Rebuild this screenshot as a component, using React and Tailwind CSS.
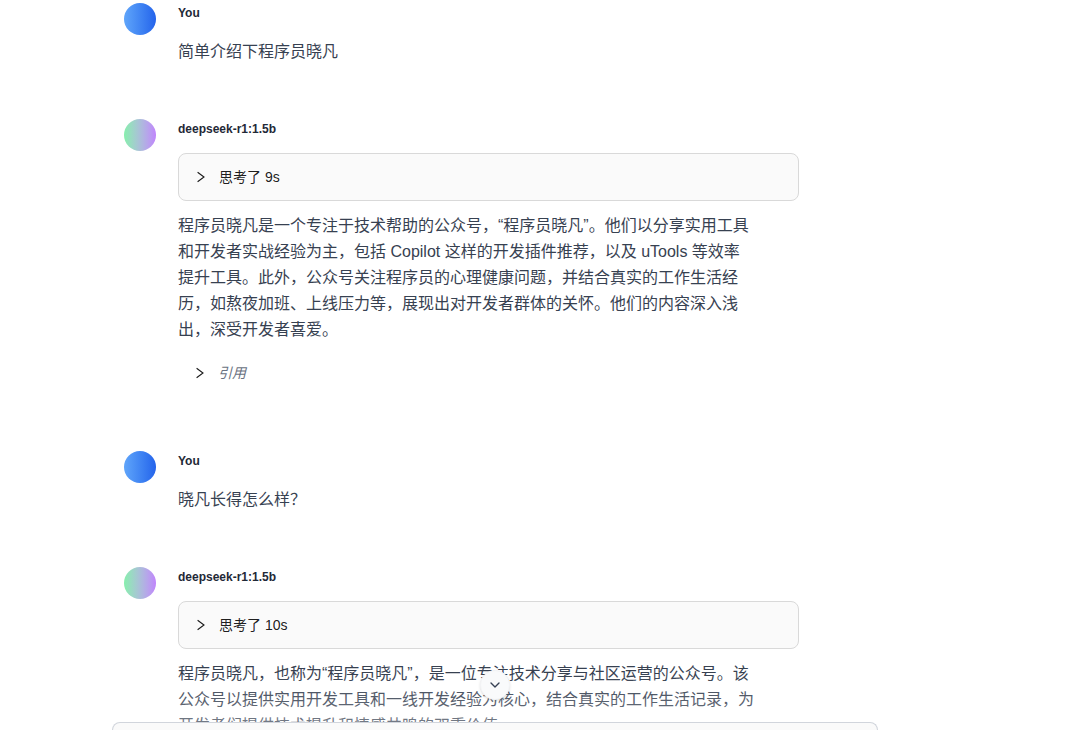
import { ChevronDown } from "lucide-react";
import { useState } from "react";

const messages = [
  { id: 1, role: "user", name: "You", text: "简单介绍下程序员晓凡" },
  {
    id: 2,
    role: "bot",
    name: "deepseek-r1:1.5b",
    seconds: 9,
    text: "程序员晓凡是一个专注于技术帮助的公众号，“程序员晓凡”。他们以分享实用工具和开发者实战经验为主，包括 Copilot 这样的开发插件推荐，以及 uTools 等效率提升工具。此外，公众号关注程序员的心理健康问题，并结合真实的工作生活经历，如熬夜加班、上线压力等，展现出对开发者群体的关怀。他们的内容深入浅出，深受开发者喜爱。",
  },
  { id: 3, role: "user", name: "You", text: "晓凡长得怎么样？" },
  {
    id: 4,
    role: "bot",
    name: "deepseek-r1:1.5b",
    seconds: 10,
    text: "程序员晓凡，也称为“程序员晓凡”，是一位专注技术分享与社区运营的公众号。该公众号以提供实用开发工具和一线开发经验为核心，结合真实的工作生活记录，为开发者们提供技术提升和情感共鸣的双重价值。",
  },
];

const Arrow = ({ open }) => (
  <svg
    viewBox="0 0 12 12"
    className={`w-3 h-3 shrink-0 text-black/90 ${open ? "rotate-90" : ""}`}
    fill="none"
    stroke="currentColor"
    strokeWidth="1.1"
    aria-hidden="true"
  >
    <path d="M2.6 1.2 9 6 2.6 10.8" />
  </svg>
);

const Collapse = ({ label, ghost }) => {
  const [open, setOpen] = useState(false);

  return (
    <button
      type="button"
      aria-expanded={open}
      onClick={() => setOpen(!open)}
      className={
        ghost
          ? "flex w-full h-12 items-center gap-3 px-4 text-sm italic text-gray-500"
          : "flex w-full h-12 items-center gap-3 px-4 text-sm text-black/90 bg-[#fafafa] border border-[#d9d9d9] rounded-lg"
      }
    >
      <Arrow open={open} />
      {label}
    </button>
  );
};

const Message = ({ message }) => {
  const isBot = message.role === "bot";

  return (
    <article className="flex gap-[22px] px-3 pb-[54px]">
      <div
        className={`w-8 h-8 shrink-0 rounded-full bg-linear-to-r ${
          isBot ? "from-[#86efac] to-[#c084fc]" : "from-[#60a5fa] to-[#2563eb]"
        }`}
      />
      <div className="w-full min-w-0 max-w-[621px] pt-0.5">
        <h2 className="text-xs font-bold text-[#1f2937]">{message.name}</h2>
        {isBot && (
          <div className="mt-4 mb-3">
            <Collapse label={`思考了 ${message.seconds}s`} />
          </div>
        )}
        <p
          className={`max-w-[577px] text-base leading-[26px] text-[#374151] [text-spacing-trim:space-all] ${
            isBot ? "" : "mt-[18px]"
          }`}
        >
          {message.text}
        </p>
        {isBot && (
          <div className="mt-1.5">
            <Collapse label="引用" ghost />
          </div>
        )}
      </div>
    </article>
  );
};

export default function App() {
  return (
    <div className="flex flex-col h-screen bg-white font-['Liberation_Sans','Noto_Sans_CJK_SC',sans-serif]">
      <main className="relative flex-1 min-h-0 overflow-hidden">
        <div className="w-full max-w-3xl ml-28 pt-[3px]">
          {messages.map((message) => (
            <Message key={message.id} message={message} />
          ))}
        </div>
        <div className="absolute inset-x-0 bottom-0 h-12 bg-linear-to-t from-white/30 to-transparent pointer-events-none" />
        <div className="absolute bottom-[22px] left-28 flex w-full max-w-[766px] justify-center">
          <button
            type="button"
            aria-label="Scroll to bottom"
            className="flex w-[30px] h-[30px] items-center justify-center rounded-full border border-gray-100 bg-gray-50 text-gray-700 shadow-sm"
          >
            <ChevronDown className="w-4 h-4" />
          </button>
        </div>
      </main>
      <footer className="w-full max-w-[766px] ml-28 h-2 shrink-0 rounded-t-xl border border-b-0 border-gray-300 bg-[#fafafa]" />
    </div>
  );
}
